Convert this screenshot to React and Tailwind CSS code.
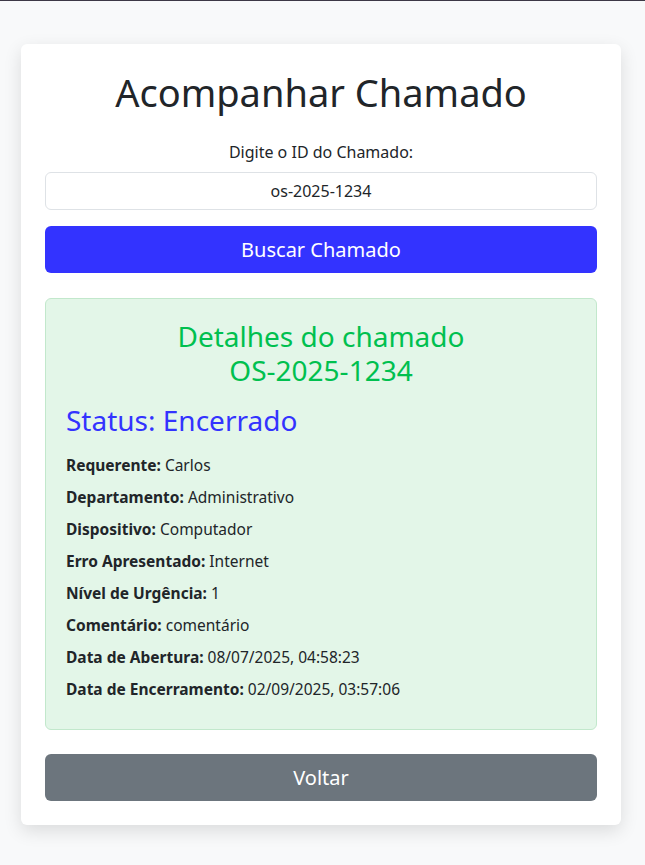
import React, { useState } from 'react';

const detalhes = [
  ['Requerente', 'Carlos'],
  ['Departamento', 'Administrativo'],
  ['Dispositivo', 'Computador'],
  ['Erro Apresentado', 'Internet'],
  ['Nível de Urgência', '1'],
  ['Comentário', 'comentário'],
  ['Data de Abertura', '08/07/2025, 04:58:23'],
  ['Data de Encerramento', '02/09/2025, 03:57:06'],
];

export default function App() {
  const [chamadoId, setChamadoId] = useState('os-2025-1234');

  return (
    <div className="min-h-[865px] bg-[#f8f9fa] border-t border-[#3d3846] text-[#212529] font-['Noto_Sans',sans-serif] pt-[43px]">
      <div className="w-[600px] ml-[21px] bg-white rounded-md shadow-[0_6px_18px_rgba(0,0,0,0.12)] p-6">
        <h1 className="text-[38px] leading-[48px] text-center mb-6">Acompanhar Chamado</h1>

        <label className="block text-center text-base leading-6 mb-2">Digite o ID do Chamado:</label>
        <input
          type="text"
          value={chamadoId}
          onChange={(e) => setChamadoId(e.target.value)}
          className="w-full h-[38px] border border-[#dee2e6] rounded-md text-center text-base outline-none mb-4"
        />

        <button className="w-full h-[47px] bg-[#3333ff] text-white text-xl rounded-md">
          Buscar Chamado
        </button>

        {/* Resultado */}
        <div className="mt-[25px] bg-[#e3f6e8] border border-[#c2e8cc] rounded-md p-5">
          <h3 className="text-[28px] leading-[34px] text-center text-[#00c04f] mb-4">
            <span className="block">Detalhes do chamado</span>
            <span className="block">OS-2025-1234</span>
          </h3>
          <h3 className="text-[28px] leading-[34px] text-[#3333ff] mb-4">Status: Encerrado</h3>
          {detalhes.map(([label, valor]) => (
            <p key={label} className="text-[15.5px] leading-6 mb-2">
              <strong className="font-bold">{label}:</strong> {valor}
            </p>
          ))}
        </div>

        <button className="w-full h-[47px] mt-6 bg-[#6c757d] text-white text-xl rounded-md">
          Voltar
        </button>
      </div>
    </div>
  );
}
